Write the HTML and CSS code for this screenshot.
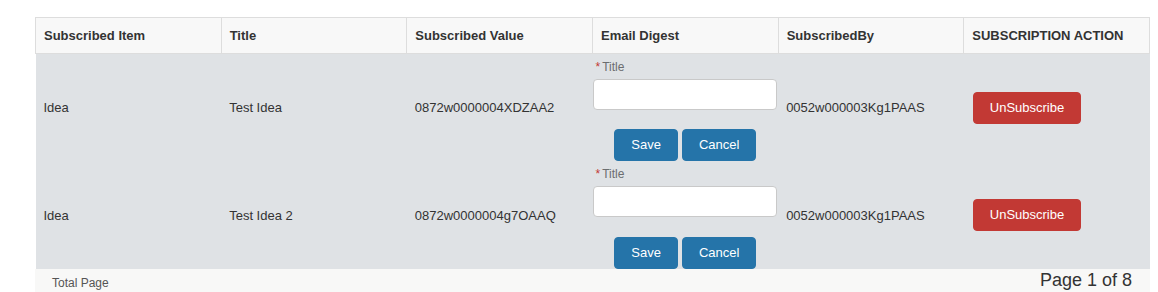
FILE: index.html
```html
<!DOCTYPE html>
<html>
<head>
<meta charset="utf-8">
<link rel="stylesheet" href="styles.css">
</head>
<body>
<div class="wrap">
  <table class="subs">
    <thead>
      <tr>
        <th>Subscribed Item</th>
        <th>Title</th>
        <th>Subscribed Value</th>
        <th>Email Digest</th>
        <th>SubscribedBy</th>
        <th>SUBSCRIPTION ACTION</th>
      </tr>
    </thead>
    <tbody>
      <tr>
        <td>Idea</td>
        <td>Test Idea</td>
        <td>0872w0000004XDZAA2</td>
        <td class="digest">
          <label class="lbl"><span class="req">*</span>Title</label>
          <input class="inp" type="text">
          <div class="btns">
            <button class="btn blue">Save</button>
            <button class="btn blue">Cancel</button>
          </div>
        </td>
        <td>0052w000003Kg1PAAS</td>
        <td><button class="btn red">UnSubscribe</button></td>
      </tr>
      <tr>
        <td>Idea</td>
        <td>Test Idea 2</td>
        <td>0872w0000004g7OAAQ</td>
        <td class="digest">
          <label class="lbl"><span class="req">*</span>Title</label>
          <input class="inp" type="text">
          <div class="btns">
            <button class="btn blue">Save</button>
            <button class="btn blue">Cancel</button>
          </div>
        </td>
        <td>0052w000003Kg1PAAS</td>
        <td><button class="btn red">UnSubscribe</button></td>
      </tr>
    </tbody>
  </table>
  <div class="foot">
    <span class="total">Total Page</span>
    <span class="pages">Page 1 of 8</span>
  </div>
</div>
</body>
</html>
```
FILE: styles.css
```css
html, body {
  margin: 0;
  padding: 0;
  background: #ffffff;
}
body {
  padding: 8px;
  font-family: "Liberation Sans", Arial, sans-serif;
  color: #333333;
}
.wrap {
  padding: 9px 0 0 27px;
}
.subs {
  width: 1115px;
  table-layout: fixed;
  border-collapse: collapse;
  font-size: 13px;
}
.subs th {
  height: 35px;
  padding: 0 8px;
  text-align: left;
  font-weight: bold;
  font-size: 13px;
  color: #333333;
  background: #f8f8f8;
  border: 1px solid #dddddd;
  vertical-align: middle;
  white-space: nowrap;
}
.subs td {
  padding: 0 8px;
  background: #dfe2e5;
  vertical-align: middle;
  color: #333333;
  height: 107px;
  box-sizing: border-box;
}
.subs tbody tr + tr td {
  height: 108px;
}
.subs td.digest {
  padding: 5px 1px 0;
  vertical-align: top;
}
.subs tbody tr + tr td.digest {
  padding-top: 5px;
}
.lbl {
  display: block;
  height: 17px;
  line-height: 17px;
  margin-bottom: 3px;
  padding-left: 2px;
  font-size: 12px;
  color: #6b6d70;
}
.req {
  color: #c23934;
  margin-right: 2px;
}
.inp {
  display: block;
  box-sizing: border-box;
  width: 184px;
  height: 31px;
  margin: 0;
  border: 1px solid #c9c9c9;
  border-radius: 4px;
  background: #ffffff;
}
.btns {
  display: flex;
  justify-content: center;
  gap: 4px;
  margin-top: 19px;
}
.subs tbody tr + tr .btns {
  margin-top: 20px;
}
.btn {
  box-sizing: border-box;
  height: 32px;
  padding: 0 16px;
  border: 1px solid transparent;
  border-radius: 4px;
  font-family: "Liberation Sans", Arial, sans-serif;
  font-size: 13px;
  color: #ffffff;
  line-height: 30px;
  cursor: pointer;
}
.btn.blue {
  background: #2574a9;
  border-color: #2574a9;
}
.btn.red {
  background: #c23934;
  border-color: #c23934;
  margin-left: 1px;
}
.foot {
  width: 1115px;
  height: 23px;
  box-sizing: border-box;
  padding: 2px 18px 0 17px;
  background: #f8f8f7;
  display: flex;
  justify-content: space-between;
  align-items: flex-start;
}
.total {
  font-size: 12px;
  line-height: 14px;
  margin-top: 5px;
  color: #555555;
}
.pages {
  font-size: 18px;
  line-height: 18px;
  color: #333333;
}
```
